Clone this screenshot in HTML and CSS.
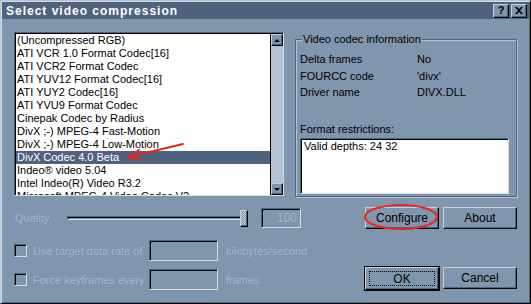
FILE: index.html
```html
<!DOCTYPE html>
<html lang="en">
<head>
    <meta charset="UTF-8">
    <title>Select video compression</title>
    <link rel="stylesheet" href="styles.css">
</head>
<body>
    <div class="window">
        <div class="titlebar">
            <span class="title">Select video compression</span>
            <div class="caption-buttons">
                <div class="caption-btn help">?</div>
                <div class="caption-btn close">
                    <svg width="8" height="7" viewBox="0 0 8 7"><path d="M0 0 L2 0 L4 2 L6 0 L8 0 L5 3.5 L8 7 L6 7 L4 5 L2 7 L0 7 L3 3.5 Z" fill="#000"/></svg>
                </div>
            </div>
        </div>

        <div class="main">
            <div class="top">
                <div class="listbox">
                    <div class="list">
                        <div class="item">(Uncompressed RGB)</div>
                        <div class="item">ATI VCR 1.0 Format Codec[16]</div>
                        <div class="item">ATI VCR2 Format Codec</div>
                        <div class="item">ATI YUV12 Format Codec[16]</div>
                        <div class="item">ATI YUY2 Codec[16]</div>
                        <div class="item">ATI YVU9 Format Codec</div>
                        <div class="item">Cinepak Codec by Radius</div>
                        <div class="item">DivX ;-) MPEG-4 Fast-Motion</div>
                        <div class="item">DivX ;-) MPEG-4 Low-Motion</div>
                        <div class="item selected">DivX Codec 4.0 Beta</div>
                        <div class="item">Indeo® video 5.04</div>
                        <div class="item">Intel Indeo(R) Video R3.2</div>
                        <div class="item">Microsoft MPEG-4 Video Codec V2</div>
                    </div>
                    <div class="scrollbar">
                        <div class="arrow-btn"><span class="tri-up"></span></div>
                        <div class="track"></div>
                        <div class="arrow-btn"><span class="tri-down"></span></div>
                    </div>
                </div>

                <div class="group">
                    <span class="group-title">Video codec information</span>
                    <div class="info">
                        <div class="info__row"><span class="info__key">Delta frames</span><span>No</span></div>
                        <div class="info__row"><span class="info__key">FOURCC code</span><span>'divx'</span></div>
                        <div class="info__row"><span class="info__key">Driver name</span><span>DIVX.DLL</span></div>
                    </div>
                    <div class="restrict-label">Format restrictions:</div>
                    <div class="restrict-box">Valid depths: 24 32</div>
                </div>
            </div>

            <div class="quality-row">
                <div class="quality">
                    <span class="disabled quality__label">Quality</span>
                    <div class="slider">
                        <div class="slider__track"></div>
                        <div class="slider__thumb"></div>
                    </div>
                    <div class="field field--small disabled">100</div>
                </div>
                <div class="btn-pair">
                    <button class="btn">Configure</button>
                    <button class="btn">About</button>
                </div>
            </div>

            <div class="lower">
                <div class="options">
                    <div class="option">
                        <span class="checkbox"></span>
                        <span class="disabled option__label">Use target data rate of</span>
                        <div class="field"></div>
                        <span class="disabled option__unit">kilobytes/second</span>
                    </div>
                    <div class="option">
                        <span class="checkbox"></span>
                        <span class="disabled option__label">Force keyframes every</span>
                        <div class="field"></div>
                        <span class="disabled option__unit">frames</span>
                    </div>
                </div>
                <div class="btn-pair btn-pair--bottom">
                    <button class="btn btn--default"><span class="focus">OK</span></button>
                    <button class="btn">Cancel</button>
                </div>
            </div>
        </div>

        <svg class="marks" width="531" height="304" viewBox="0 0 531 304">
            <path d="M183 144 L128 157 M128 157 L139 150 M128 157 L140 160" stroke="#e8281e" stroke-width="2" fill="none" stroke-linecap="round"/>
            <ellipse cx="401" cy="217" rx="36" ry="12" stroke="#e8281e" stroke-width="2" fill="none"/>
        </svg>
    </div>
</body>
</html>
```

FILE: styles.css
```css
* {
    box-sizing: border-box;
    margin: 0px;
    padding: 0px;
}
body {
    background-color: #8096ae;
    font-family: "Liberation Sans", Arial, sans-serif;
    font-size: 11px;
    color: #000;
}
.window {
    width: 531px;
    height: 304px;
    position: relative;
    background-color: #8096ae;
    border: 1px solid;
    border-color: #b4c2d1 #000 #000 #b4c2d1;
    box-shadow: inset 1px 1px 0 #d5dde7, inset -1px -1px 0 #4f637f;
    padding: 1px;
}
.titlebar {
    height: 17px;
    background-color: #4f637f;
    display: flex;
    justify-content: space-between;
    align-items: center;
    padding: 0px 2px 0px 4px;
}
.title {
    color: #fff;
    font-weight: bold;
    font-size: 12px;
    letter-spacing: 1px;
}
.caption-buttons {
    display: flex;
    gap: 2px;
}
.caption-btn {
    width: 16px;
    height: 14px;
    background-color: #8096ae;
    border: 1px solid;
    border-color: #c4d0dc #000 #000 #c4d0dc;
    box-shadow: inset -1px -1px 0 #4f637f;
    display: flex;
    justify-content: center;
    align-items: center;
    font-weight: bold;
    font-size: 11px;
    line-height: 1;
}
.main {
    padding: 13px 12px 0px 12px;
}
.top {
    display: flex;
    align-items: flex-start;
}
.listbox {
    width: 270px;
    height: 164px;
    display: flex;
    border: 1px solid;
    border-color: #4f637f #d5dde7 #d5dde7 #4f637f;
    box-shadow: inset 1px 1px 0 #000;
    padding: 1px 0px 0px 1px;
    background-color: #fff;
}
.list {
    flex: 1;
    overflow: hidden;
    background-color: #fff;
}
.item {
    height: 13px;
    line-height: 13px;
    padding-left: 1px;
    white-space: nowrap;
}
.item.selected {
    background-color: #4f637f;
    color: #fff;
}
.scrollbar {
    width: 13px;
    display: flex;
    flex-direction: column;
    background-color: #b4c2d1;
    border-left: 1px solid #000;
}
.track {
    flex: 1;
}
.arrow-btn {
    height: 12px;
    background-color: #8096ae;
    border: 1px solid;
    border-color: #c4d0dc #000 #000 #c4d0dc;
    box-shadow: inset -1px -1px 0 #4f637f;
    display: flex;
    justify-content: center;
    align-items: center;
}
.tri-up {
    border-left: 3px solid transparent;
    border-right: 3px solid transparent;
    border-bottom: 3px solid #000;
}
.tri-down {
    border-left: 3px solid transparent;
    border-right: 3px solid transparent;
    border-top: 3px solid #000;
}
.group {
    width: 222px;
    height: 158px;
    margin: 7px 0px 0px 11px;
    border: 1px solid #4f637f;
    box-shadow: 1px 1px 0 #b4c2d1, inset 1px 1px 0 #b4c2d1;
    position: relative;
    padding: 11px 0px 0px 4px;
}
.group-title {
    position: absolute;
    top: -7px;
    left: 6px;
    padding: 0px 1px;
    background-color: #8096ae;
    line-height: 13px;
}
.info__row {
    display: flex;
    height: 16.5px;
    line-height: 16px;
}
.info__key {
    width: 117px;
}
.restrict-label {
    margin-top: 22px;
    line-height: 13px;
}
.restrict-box {
    width: 209px;
    height: 56px;
    margin-top: 2px;
    background-color: #fff;
    border: 1px solid;
    border-color: #4f637f #d5dde7 #d5dde7 #4f637f;
    box-shadow: inset 1px 1px 0 #000;
    padding: 1px 3px;
    line-height: 13px;
}
.quality-row {
    display: flex;
    justify-content: space-between;
    align-items: center;
    margin-top: 10px;
    height: 22px;
}
.quality {
    display: flex;
    align-items: center;
}
.quality__label {
    width: 53px;
    padding-left: 1px;
}
.slider {
    width: 181px;
    height: 22px;
    display: flex;
    align-items: center;
}
.slider__track {
    flex: 1;
    height: 4px;
    border: 1px solid;
    border-color: #4f637f #d5dde7 #d5dde7 #4f637f;
    box-shadow: inset 1px 1px 0 #000;
}
.slider__thumb {
    width: 8px;
    height: 17px;
    margin-left: -6px;
    border: 1px solid;
    border-color: #c4d0dc #000 #000 #c4d0dc;
    box-shadow: inset -1px -1px 0 #4f637f;
    background-color: #a6b5c6;
    background-image: repeating-conic-gradient(#c4d0dc 0% 25%, #8096ae 0% 50%);
    background-size: 2px 2px;
}
.field {
    width: 69px;
    height: 21px;
    border: 1px solid;
    border-color: #4f637f #d5dde7 #d5dde7 #4f637f;
    box-shadow: inset 1px 1px 0 #000;
}
.field--small {
    width: 40px;
    height: 20px;
    margin-left: 13px;
    text-align: right;
    padding-right: 3px;
    line-height: 18px;
    font-size: 12px;
}
.disabled {
    color: #a7b6c7;
    text-shadow: 1px 1px 0 #7a90a8;
}
.btn-pair {
    display: flex;
    gap: 4px;
}
.btn {
    width: 74px;
    height: 22px;
    font-family: "Liberation Sans", Arial, sans-serif;
    font-size: 12px;
    color: #000;
    background-color: #8096ae;
    border: 1px solid;
    border-color: #c4d0dc #000 #000 #c4d0dc;
    box-shadow: inset -1px -1px 0 #4f637f;
}
.btn--default {
    height: 23px;
    outline: 1px solid #000;
    outline-offset: 0px;
    border-width: 1px;
    padding: 3px;
    display: flex;
}
.focus {
    flex: 1;
    display: flex;
    justify-content: center;
    align-items: center;
    border: 1px dotted #000;
}
.btn-pair--bottom {
    align-self: flex-end;
}
.lower {
    display: flex;
    justify-content: space-between;
    margin-top: 11px;
}
.options {
    display: flex;
    flex-direction: column;
    gap: 8px;
}
.option {
    display: flex;
    align-items: center;
    height: 21px;
}
.checkbox {
    width: 13px;
    height: 13px;
    border: 1px solid;
    border-color: #4f637f #d5dde7 #d5dde7 #4f637f;
    box-shadow: inset 1px 1px 0 #000;
    margin-right: 6px;
}
.option__label {
    width: 116px;
}
.option__unit {
    margin-left: 8px;
}
.marks {
    position: absolute;
    left: -1px;
    top: -1px;
    pointer-events: none;
}
```
